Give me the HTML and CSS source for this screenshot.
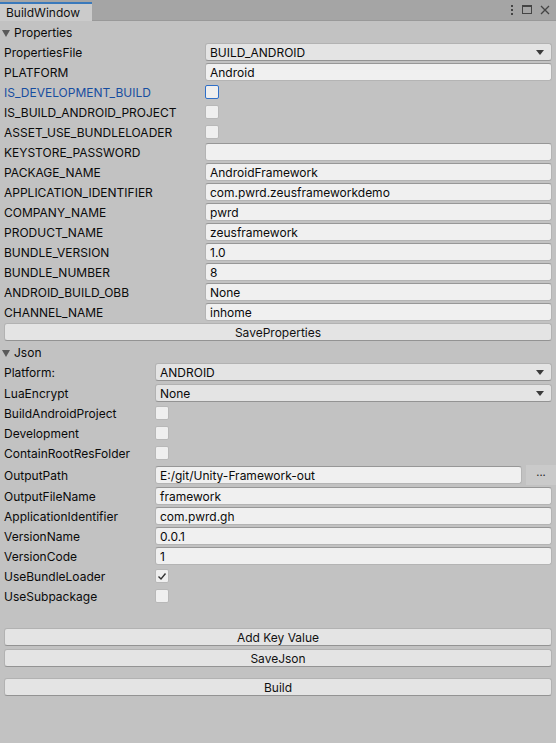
FILE: index.html
```html
<!DOCTYPE html>
<html>
<head>
<meta charset="utf-8">
<link rel="stylesheet" href="styles.css">
</head>
<body>
<div class="tabbar">
  <div class="tab">BuildWindow</div>
  <div class="tab-icons">
    <svg width="6" height="12" viewBox="0 0 6 12"><rect x="2" y="1" width="2" height="2" fill="#444"/><rect x="2" y="5" width="2" height="2" fill="#444"/><rect x="2" y="9" width="2" height="2" fill="#444"/></svg>
    <svg width="12" height="12" viewBox="0 0 12 12"><rect x="1.5" y="1.5" width="9" height="8" fill="none" stroke="#444" stroke-width="1"/><rect x="1" y="1" width="10" height="2" fill="#444"/></svg>
    <svg width="12" height="12" viewBox="0 0 12 12"><path d="M2 2 L10 10 M10 2 L2 10" stroke="#444" stroke-width="1.3"/></svg>
  </div>
</div>
<div class="content">
  <div class="foldout"><span class="tri"></span>Properties</div>
  <div class="section props">
    <div class="row"><span class="label">PropertiesFile</span><div class="dropdown">BUILD_ANDROID<span class="arrow"></span></div></div>
    <div class="row"><span class="label">PLATFORM</span><div class="field">Android</div></div>
    <div class="row"><span class="label focus">IS_DEVELOPMENT_BUILD</span><div class="check check-focus"></div></div>
    <div class="row"><span class="label">IS_BUILD_ANDROID_PROJECT</span><div class="check"></div></div>
    <div class="row"><span class="label">ASSET_USE_BUNDLELOADER</span><div class="check"></div></div>
    <div class="row"><span class="label">KEYSTORE_PASSWORD</span><div class="field"></div></div>
    <div class="row"><span class="label">PACKAGE_NAME</span><div class="field">AndroidFramework</div></div>
    <div class="row"><span class="label">APPLICATION_IDENTIFIER</span><div class="field">com.pwrd.zeusframeworkdemo</div></div>
    <div class="row"><span class="label">COMPANY_NAME</span><div class="field">pwrd</div></div>
    <div class="row"><span class="label">PRODUCT_NAME</span><div class="field">zeusframework</div></div>
    <div class="row"><span class="label">BUNDLE_VERSION</span><div class="field">1.0</div></div>
    <div class="row"><span class="label">BUNDLE_NUMBER</span><div class="field">8</div></div>
    <div class="row"><span class="label">ANDROID_BUILD_OBB</span><div class="field">None</div></div>
    <div class="row"><span class="label">CHANNEL_NAME</span><div class="field">inhome</div></div>
    <div class="button">SaveProperties</div>
  </div>
  <div class="foldout foldout-json"><span class="tri"></span>Json</div>
  <div class="section json">
    <div class="row row-platform"><span class="label">Platform:</span><div class="dropdown">ANDROID<span class="arrow"></span></div></div>
    <div class="row"><span class="label">LuaEncrypt</span><div class="dropdown">None<span class="arrow"></span></div></div>
    <div class="row"><span class="label">BuildAndroidProject</span><div class="check"></div></div>
    <div class="row"><span class="label">Development</span><div class="check"></div></div>
    <div class="row"><span class="label">ContainRootResFolder</span><div class="check"></div></div>
    <div class="row row-path"><span class="label">OutputPath</span><div class="field">E:/git/Unity-Framework-out</div><div class="browse">...</div></div>
    <div class="row"><span class="label">OutputFileName</span><div class="field">framework</div></div>
    <div class="row"><span class="label">ApplicationIdentifier</span><div class="field">com.pwrd.gh</div></div>
    <div class="row"><span class="label">VersionName</span><div class="field">0.0.1</div></div>
    <div class="row"><span class="label">VersionCode</span><div class="field">1</div></div>
    <div class="row"><span class="label">UseBundleLoader</span><div class="check"><svg width="12" height="12" viewBox="0 0 12 12"><path d="M2.5 6.5 L5 9 L9.5 3.5" fill="none" stroke="#333" stroke-width="1.4"/></svg></div></div>
    <div class="row"><span class="label">UseSubpackage</span><div class="check"></div></div>
  </div>
  <div class="actions">
    <div class="button">Add Key Value</div>
    <div class="button">SaveJson</div>
    <div class="button build">Build</div>
  </div>
</div>
</body>
</html>
```
FILE: styles.css
```css
html, body {
  margin: 0;
  padding: 0;
  background: #c2c2c2;
  font-family: Inter, "Noto Sans", sans-serif;
  font-size: 12px;
  color: #0a0a0a;
  width: 556px;
  height: 743px;
  overflow: hidden;
}

.tabbar {
  height: 21px;
  background: #a5a5a5;
  display: flex;
  align-items: flex-end;
  justify-content: space-between;
  border-bottom: 1px solid #999;
  box-sizing: border-box;
}

.tab {
  width: 92px;
  height: 19px;
  background: #cbcbcb;
  border-top: 2px solid #3a79bb;
  box-sizing: border-box;
  padding-left: 6px;
  line-height: 17px;
  font-size: 12px;
  color: #111;
  margin-bottom: -1px;
}

.tab-icons {
  display: flex;
  align-items: center;
  gap: 6px;
  padding-right: 5px;
  height: 20px;
}

.content {
  padding: 3px 4px 0 4px;
}

.foldout {
  height: 18px;
  line-height: 18px;
  display: flex;
  align-items: center;
  margin-bottom: 1px;
  margin-left: -3px;
}

.foldout-json {
  margin-top: 3px;
  margin-bottom: 1px;
}

.tri {
  width: 0;
  height: 0;
  border-left: 4px solid transparent;
  border-right: 4px solid transparent;
  border-top: 7px solid #5a5a5a;
  margin: 0 4px 0 1px;
}

.row {
  display: flex;
  align-items: center;
  height: 18px;
  margin-bottom: 2px;
}

.label {
  flex: 0 0 auto;
  white-space: nowrap;
}

.props .label { width: 201px; }
.json .label { width: 151px; }

.label.focus { color: #174da0; }

.field, .dropdown {
  flex: 1;
  height: 18px;
  box-sizing: border-box;
  border-radius: 3px;
  padding: 0 4px;
  line-height: 18px;
  white-space: nowrap;
  overflow: hidden;
}

.field {
  background: #f0f0f0;
  border: 1px solid #b4b4b4;
  border-top-color: #979797;
}

.dropdown {
  background: #e4e4e4;
  border: 1px solid #b2b2b2;
  border-bottom-color: #939393;
  position: relative;
  line-height: 17px;
}

.arrow {
  position: absolute;
  right: 7px;
  top: 6px;
  width: 0;
  height: 0;
  border-left: 4px solid transparent;
  border-right: 4px solid transparent;
  border-top: 5px solid #3c3c3c;
}

.check {
  width: 14px;
  height: 14px;
  box-sizing: border-box;
  background: #efefef;
  border: 1px solid #b8b8b8;
  border-radius: 2px;
  display: flex;
  align-items: center;
  justify-content: center;
}

.check-focus {
  border-color: #2f6fc8;
}

.row-platform { margin-bottom: 3px; }

.row-path {
  height: 22px;
  margin-bottom: 1px;
}

.row-path .field {
  margin-right: 4px;
}

.browse {
  width: 30px;
  height: 20px;
  margin-right: -4px;
  background: #cacaca;
  text-align: center;
  line-height: 14px;
  font-size: 11px;
  color: #222;
}

.button {
  height: 18px;
  box-sizing: border-box;
  background: #e4e4e4;
  border: 1px solid #b2b2b2;
  border-bottom-color: #939393;
  border-radius: 3px;
  text-align: center;
  line-height: 17px;
  color: #111;
}

.actions {
  margin-top: 23px;
  display: flex;
  flex-direction: column;
  gap: 3px;
}

.actions .build {
  margin-top: 8px;
}
```
